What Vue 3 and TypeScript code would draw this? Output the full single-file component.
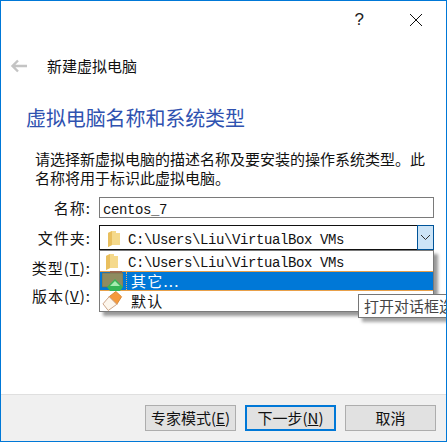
<template>
  <div class="window">
    <div class="titlebar">
      <span class="help">?</span>
      <svg class="close" width="14" height="14" viewBox="0 0 14 14">
        <path d="M1 1L13 13M13 1L1 13" stroke="#111" stroke-width="1" fill="none" />
      </svg>
    </div>

    <div class="nav">
      <svg class="back" width="18" height="14" viewBox="0 0 18 14">
        <path d="M17 7H3M8 1.5L2.5 7L8 12.5" stroke="#c4c4c4" stroke-width="2.4" fill="none" />
      </svg>
      <span class="nav-title">新建虚拟电脑</span>
    </div>

    <div class="content">
      <h1 class="heading">虚拟电脑名称和系统类型</h1>
      <p class="desc">请选择新虚拟电脑的描述名称及要安装的操作系统类型。此<br />名称将用于标识此虚拟电脑。</p>

      <div class="form">
        <label class="label">名称:</label>
        <div class="input"><span class="mono">centos_7</span></div>

        <label class="label">文件夹:</label>
        <div class="combo-wrap">
          <div class="combo">
            <svg class="folder" width="14" height="18" viewBox="0 0 14 18">
              <path d="M1 3L5 1H9V3H13V15H5L1 17Z" fill="#f5d98b" />
              <path d="M1 3L5 1V15L1 17Z" fill="#e9bf5e" />
            </svg>
            <span class="mono">C:\Users\Liu\VirtualBox VMs</span>
            <div class="combo-btn">
              <svg width="11" height="7" viewBox="0 0 11 7">
                <path d="M1 1L5.5 5.5L10 1" stroke="#333" fill="none" />
              </svg>
            </div>
          </div>

          <div class="dropdown">
            <div v-for="item in items" :key="item.key" class="option" :class="{ selected: item.key === 'other' }">
              <svg v-if="item.key === 'path'" class="folder" width="14" height="18" viewBox="0 0 14 18">
                <path d="M1 3L5 1H9V3H13V15H5L1 17Z" fill="#f5d98b" />
                <path d="M1 3L5 1V15L1 17Z" fill="#e9bf5e" />
              </svg>
              <svg v-else-if="item.key === 'other'" class="opt-icon" width="21" height="20" viewBox="0 0 21 20">
                <path d="M8 0H20V3H8Z" fill="#a06a50" />
                <path d="M0 2H21V16H0Z" fill="#8f8c60" stroke="#6f6a4c" stroke-width="0.6" />
                <path d="M13 8L21 16L18 20H8L5 16Z" fill="#36b555" />
                <path d="M13 10L18 15H8Z" fill="#a7ecb0" />
              </svg>
              <svg v-else class="opt-icon" width="21" height="20" viewBox="0 0 21 21">
                <path d="M14 0.5L20 6L15 14L7 6Z" fill="#f59a3c" stroke="#d9852f" />
                <path d="M7 6L15 14L6 20.5L0.5 13.5Z" fill="#fdf6ec" stroke="#c9a083" />
              </svg>
              <span v-if="item.key === 'path'" class="mono path-text">{{ item.text }}</span>
              <span v-else class="opt-text" :class="{ focused: item.key === 'other' }">{{ item.text }}</span>
            </div>
          </div>
        </div>

        <label class="label">类型(<u>T</u>):</label>
        <div class="covered"></div>

        <label class="label">版本(<u>V</u>):</label>
        <div class="covered"></div>
      </div>
    </div>

    <div class="footer">
      <button class="btn">专家模式(<u>E</u>)</button>
      <button class="btn primary">下一步(<u>N</u>)</button>
      <button class="btn">取消</button>
    </div>

    <div class="tooltip">打开对话框选择</div>
  </div>
</template>

<script setup lang="ts">
interface Item {
  key: string;
  text: string;
}

const items: Item[] = [
  { key: 'path', text: 'C:\\Users\\Liu\\VirtualBox VMs' },
  { key: 'other', text: '其它...' },
  { key: 'default', text: '默认' },
];
</script>

<style>
html, body { margin: 0; background: #fff; overflow: hidden; }
</style>

<style scoped>
.window {
  position: relative; box-sizing: border-box; width: 447px; height: 442px; overflow: hidden;
  border: 1px solid #0078d7; border-left-width: 1.5px; background: #fff; color: #111;
  display: flex; flex-direction: column;
  font-family: "Noto Sans CJK SC", "Liberation Sans", sans-serif; font-size: 15px;
}
.titlebar { height: 37px; flex: none; display: flex; align-items: center; justify-content: flex-end; padding-right: 23px; gap: 45px; }
.help { font-family: "Liberation Sans", sans-serif; font-size: 17px; color: #222; }
.nav { height: 56px; flex: none; display: flex; align-items: center; padding-left: 9px; gap: 19px; }
.nav-title { line-height: 20px; }
.content { flex: 1; padding: 0 12px 0 25px; }
.heading { margin: 10px 0 0; font-size: 20px; font-weight: 400; line-height: 28px; color: #2f52b0; letter-spacing: -0.1px; }
.desc { margin: 17px 0 0 9px; line-height: 19px; white-space: nowrap; letter-spacing: 0; }
.form { margin-top: 10px; display: grid; grid-template-columns: 65px 335px; column-gap: 8px; row-gap: 7px; align-items: center; letter-spacing: 0; }
.label { text-align: right; line-height: 20px; letter-spacing: 1px; white-space: nowrap; }
.label u { text-underline-offset: 1px; }
.mono { font-family: "Liberation Mono", "DejaVu Sans Mono", monospace; font-size: 14px; letter-spacing: -0.4px; padding-top: 4px; }
.input { box-sizing: border-box; height: 21px; border: 1px solid #7a7a7a; display: flex; align-items: center; padding-left: 3px; }
.combo-wrap { position: relative; }
.combo { box-sizing: border-box; height: 25px; border: 1px solid #111; border-right: none; display: flex; align-items: center; padding-left: 7px; }
.combo .folder { margin: 3px 7px 0 0; }
.combo-btn { margin-left: auto; box-sizing: border-box; width: 17px; height: 25px; background: #cce4f7; border: 1px solid #005499; display: flex; align-items: center; justify-content: center; }
.dropdown {
  position: absolute; z-index: 2; top: 25px; left: 0; right: 0; box-sizing: border-box; height: 62px;
  background: #fff; border: 1px solid #7a7a7a; box-shadow: 4px 4px 3px rgba(0, 0, 0, 0.4);
}
.option { height: 20px; display: flex; align-items: center; gap: 3px; padding-left: 2px; }
.option .folder { margin: 2px 6px 0 3px; }
.selected { background: #0078d7; color: #fff; box-shadow: inset 0 1px 0 #e8a04a, inset 0 -1px 0 #e8a04a; }
.opt-icon { flex: none; }
.opt-text { line-height: 18px; padding-left: 4px; letter-spacing: 1.2px; flex: 1; border-left: 1px solid transparent; }
.focused { border-left: 1px dotted #f2b060; }
.covered { height: 21px; }
.footer {
  flex: none; height: 47px; box-sizing: border-box; background: #f0f0f0; border-top: 1px solid #dfdfdf;
  display: flex; justify-content: flex-end; align-items: center; gap: 9px; padding: 0 10px 0 0;
}
.btn {
  box-sizing: border-box; width: 91px; height: 26px; padding: 0; background: #e1e1e1; border: 1px solid #adadad; border-radius: 0;
  color: #111; font: inherit; line-height: 20px; white-space: nowrap;
}
.primary { border: 2px solid #0078d7; }
.tooltip {
  position: absolute; z-index: 3; top: 293px; left: 357px; width: 110px; height: 24px; box-sizing: border-box;
  background: #fff; border: 1px solid #767676; color: #444; padding-left: 5px; line-height: 21px; white-space: nowrap;
  box-shadow: 4px 4px 3px rgba(0, 0, 0, 0.35);
}
</style>
